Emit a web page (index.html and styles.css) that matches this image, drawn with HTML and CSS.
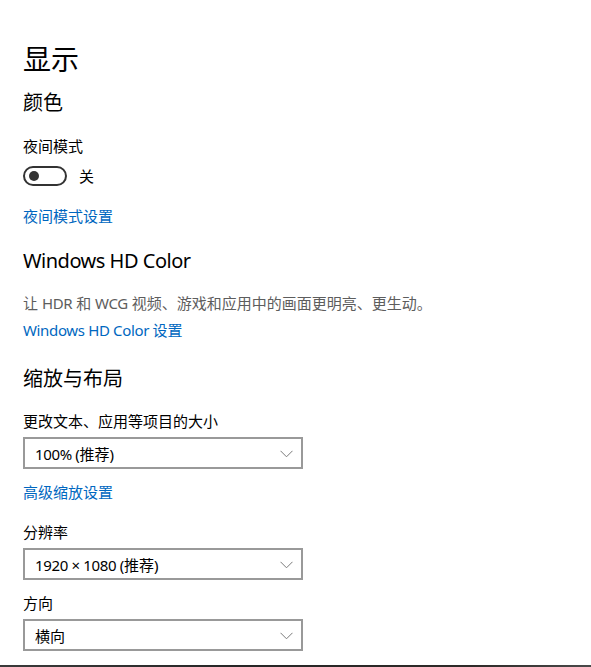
FILE: index.html
```html
<!DOCTYPE html>
<html lang="zh-CN">
<head>
<meta charset="utf-8">
<title>显示</title>
<link rel="stylesheet" href="styles.css">
</head>
<body>
<main class="page">
  <h1 class="title">显示</h1>

  <h2 class="section first">颜色</h2>
  <div class="label gap-19">夜间模式</div>
  <div class="toggle-row">
    <span class="toggle"><span class="knob"></span></span>
    <span class="toggle-text">关</span>
  </div>
  <a class="link gap-20" href="#">夜间模式设置</a>

  <h2 class="section gap-21"><span class="latin-h">Windows HD Color</span></h2>
  <p class="desc">让 <span class="latin">HDR</span> 和 <span class="latin">WCG</span> 视频、游戏和应用中的画面更明亮、更生动。</p>
  <a class="link gap-7" href="#"><span class="latin">Windows HD Color </span>设置</a>

  <h2 class="section gap-25">缩放与布局</h2>
  <div class="label gap-18">更改文本、应用等项目的大小</div>
  <div class="select gap-6"><span><span class="latin">100% (</span>推荐)</span><svg class="chev" width="13" height="8" viewBox="0 0 13 8"><path d="M0.5 0.8 L6.5 6.8 L12.5 0.8" fill="none" stroke="#7a7a7a" stroke-width="1"/></svg></div>
  <a class="link gap-13" href="#">高级缩放设置</a>

  <div class="label gap-20">分辨率</div>
  <div class="select gap-6"><span><span class="latin">1920 × 1080 (</span>推荐)</span><svg class="chev" width="13" height="8" viewBox="0 0 13 8"><path d="M0.5 0.8 L6.5 6.8 L12.5 0.8" fill="none" stroke="#7a7a7a" stroke-width="1"/></svg></div>

  <div class="label gap-13">方向</div>
  <div class="select gap-6"><span>横向</span><svg class="chev" width="13" height="8" viewBox="0 0 13 8"><path d="M0.5 0.8 L6.5 6.8 L12.5 0.8" fill="none" stroke="#7a7a7a" stroke-width="1"/></svg></div>
</main>
<div class="edge"></div>
</body>
</html>
```

FILE: styles.css
```css
* { box-sizing: border-box; }
html, body { margin: 0; padding: 0; background: #fff; }
body {
  width: 591px;
  height: 667px;
  overflow: hidden;
  font-family: "Segoe UI", "Noto Sans", "Noto Sans CJK SC", sans-serif;
  color: #000;
  display: flex;
  flex-direction: column;
}
.page {
  padding: 39px 0 0 23px;
  display: flex;
  flex-direction: column;
  align-items: flex-start;
  flex: 1;
}
.title {
  margin: 0;
  font-size: 28px;
  line-height: 40px;
  font-weight: 400;
}
.section {
  margin: 0;
  font-size: 20px;
  line-height: 28px;
  font-weight: 400;
}
.latin-h { letter-spacing: -0.5px; }
.latin { letter-spacing: -0.35px; }
.section.first { margin-top: 10px; }
.label, .desc, .link, .toggle-text {
  font-size: 15px;
  line-height: 20px;
}
.desc { margin: 18px 0 0; color: #5d5d5d; }
.link { color: #0067c0; text-decoration: none; }
.gap-6 { margin-top: 6px; }
.gap-7 { margin-top: 7px; }
.gap-13 { margin-top: 13px; }
.gap-18 { margin-top: 18px; }
.gap-19 { margin-top: 19px; }
.gap-20 { margin-top: 20px; }
.gap-21 { margin-top: 21px; }
.gap-25 { margin-top: 25px; }
.toggle-row {
  margin-top: 10px;
  display: flex;
  align-items: center;
  gap: 12px;
  height: 20px;
}
.toggle {
  width: 44px;
  height: 20px;
  border: 2px solid #333;
  border-radius: 10px;
  display: flex;
  align-items: center;
  padding-left: 4px;
}
.knob {
  width: 10px;
  height: 10px;
  border-radius: 50%;
  background: #333;
}
.select {
  width: 280px;
  height: 32px;
  border: 2px solid #999;
  display: flex;
  align-items: center;
  justify-content: space-between;
  padding: 0 8px 0 10px;
  font-size: 15px;
}
.chev { display: block; margin-top: 1px; }
.edge {
  height: 2px;
  background: linear-gradient(90deg, #3a3a3a, #262626 40%, #2e2a28 80%, #4a4a4a);
}
```
